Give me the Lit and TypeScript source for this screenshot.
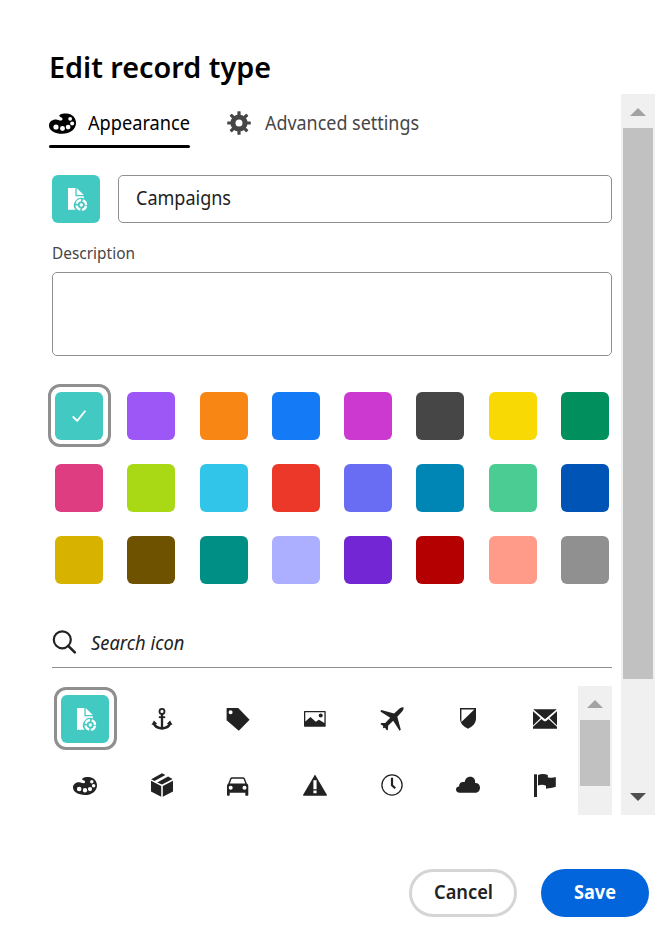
import { LitElement, html, svg, css, nothing } from "lit";
import { customElement, state } from "lit/decorators.js";
import { classMap } from "lit/directives/class-map.js";
import { styleMap } from "lit/directives/style-map.js";

const COLORS = [
  "#42c9c1", "#9d57f6", "#f88615", "#147af5", "#cc39d0", "#464646", "#f8d904", "#008f5d",
  "#de3d82", "#a9d815", "#31c5e9", "#eb3829", "#686df4", "#0086b4", "#4acc93", "#0054b6",
  "#d7b300", "#6f5200", "#008f85", "#acafff", "#7326d3", "#b40000", "#ff9b88", "#909090",
];

const ICONS: Record<string, unknown> = {
  file: svg`
    <path d="M4 1H11.4V9.2H19.8V11.3A7.3 7.3 0 0 0 11.6 22.8H4Z"/>
    <path d="M12.7 1L19.8 8.1H12.7Z"/>
    <circle cx="17.3" cy="18" r="4.8" fill="none" stroke="currentColor" stroke-width="2.2" stroke-dasharray="5.9 1.64" stroke-dashoffset="-.82"/>
    <circle cx="17.3" cy="18" r="1.7"/>`,
  anchor: svg`
    <g fill="none" stroke="currentColor" stroke-width="2">
      <circle cx="12" cy="4.4" r="2.5" stroke-width="1.8"/>
      <path d="M12 7V21.5" stroke-width="2.3"/><path d="M8.8 10.2H15.2" stroke-width="1.8"/>
      <path d="M3.8 16.2C4.8 19.6 8.2 21.2 12 21.4C15.8 21.2 19.2 19.6 20.2 16.2" stroke-width="2.6"/>
    </g>
    <path d="M3.9 13.4L7.2 16.8L1.5 17.9Z"/><path d="M20.1 13.4L16.8 16.8L22.5 17.9Z"/>`,
  tag: svg`<path fill-rule="evenodd" d="M1.2 1H12.2L23.6 12.7L12.8 23.7L.6 13.2V1.6Q.6 1 1.2 1ZM4.6 3.3A2 2 0 1 0 4.6 7.3A2 2 0 1 0 4.6 3.3Z"/>`,
  image: svg`
    <path fill-rule="evenodd" d="M1.6 4H22.1Q22.7 4 22.7 4.6V19.1Q22.7 19.7 22.1 19.7H1.6Q1 19.7 1 19.1V4.6Q1 4 1.6 4ZM2.3 5.3V14.6L7.5 10.1L12.7 14.8L16 12.8L21.4 16V5.3Z"/>
    <circle cx="17.7" cy="8.6" r="2"/>`,
  plane: svg`<path d="M23.4 .5C24.2 1.6 22.6 4.2 21.2 5.6L17.3 9.7L20.8 22.8L19.6 23.7L13.2 13.8L8.1 18.7L8 22.6L7 23.5L5 20.8L3 21.2L3.2 19.1L.4 17L1.3 16L5.2 15.9L10.2 10.7L.4 4.4L1.3 3.1L14.1 6.5L18.2 2.7C19.7 1.2 22.3-.3 23.4 .5Z"/>`,
  shield: svg`<path fill-rule="evenodd" d="M4 1H20V11.5C20 16.4 16.4 19.6 12 21.7C7.6 19.6 4 16.4 4 11.5ZM5.4 2.5V15L18.3 2.5Z"/>`,
  mail: svg`
    <path d="M.2 2.3H23.8L12.9 11.5Q12 12.3 11.1 11.5Z" />
    <path d="M0 4.2L7.6 11.1L0 18.4ZM24 4.2L16.4 11.1L24 18.4Z"/>
    <path d="M8.5 12L10.5 13.7Q12 14.8 13.5 13.7L15.5 12L24 19.8V21.7H0V19.8Z"/>`,
  palette: svg`
    <path fill-rule="evenodd" d="M0 14.6C0 11.2 3 9.2 6.3 9.3C8 9.4 9.2 10.4 10.8 10.2C12.5 9.9 12.4 8.2 11.1 7.6C9.6 6.9 8.7 6.3 9.4 5.4C10.6 4.3 13 4 15.5 4C20.5 4 24 7.9 24 12.4C24 18 18.5 22 12 22C5 22 0 19 0 14.6Z
      M6.2 13.7A2.3 2.3 0 1 0 6.2 18.3A2.3 2.3 0 1 0 6.2 13.7Z
      M12 15.1A2.2 2.2 0 1 0 12 19.5A2.2 2.2 0 1 0 12 15.1Z
      M17 14A2.1 2.1 0 1 0 17 18.2A2.1 2.1 0 1 0 17 14Z
      M20.6 11A1.8 1.8 0 1 0 20.6 14.6A1.8 1.8 0 1 0 20.6 11Z
      M18.8 7A1.7 1.7 0 1 0 18.8 10.4A1.7 1.7 0 1 0 18.8 7Z"/>`,
  box: svg`
    <path d="M1.2 6.2L12 .3L15.4 2L4.5 8ZM7.2 9.4L18.1 3.5L22.6 6L12 11.6Z"/>
    <path d="M1 7.8L11.2 13V23.7L1 18.4ZM23 7.8V18.4L12.8 23.7V13Z"/>`,
  car: svg`<path fill-rule="evenodd" d="M6.6 4.3H16.4C18 4.3 18.7 4.9 19.2 6.3L20.8 10.6C22 11.3 22.3 12.1 22.3 13.4V22.1Q22.3 22.7 21.7 22.7H19.9Q19.3 22.7 19.3 22.1V19.7H3.7V22.1Q3.7 22.7 3.1 22.7H1.6Q1 22.7 1 22.1V13.4C1 12.1 1.3 11.3 2.3 10.6L3.9 6.3C4.4 4.9 5 4.3 6.6 4.3ZM6.6 5.7C5.8 5.7 5.5 6 5.2 6.8L3.8 10.6H19.3L17.9 6.8C17.6 6 17.3 5.7 16.5 5.7ZM4.7 12.7A2 2 0 1 0 4.7 16.7A2 2 0 1 0 4.7 12.7ZM18.5 12.7A2 2 0 1 0 18.5 16.7A2 2 0 1 0 18.5 12.7Z"/>`,
  alert: svg`<path fill-rule="evenodd" d="M12 1.5L24 22.1Q24 22.7 23.4 22.7H.6Q0 22.7 0 22.1ZM10.4 7.2V16.2H13.6V7.2ZM10.4 17.5V20.3H13.6V17.5Z"/>`,
  clock: svg`
    <circle cx="12" cy="12" r="10.1" fill="none" stroke="currentColor" stroke-width="1.3"/>
    <path d="M12 4.8V12.2L15.2 15.3" fill="none" stroke="currentColor" stroke-width="2.2"/>`,
  cloud: svg`<path d="M3.6 19.7C1.4 19.7 0 18.3 0 16.5C0 14.6 1.5 13.4 3.2 13.5C2.8 10.6 5.1 8.4 8.7 9.1C9.1 5.9 11.2 3.7 14.2 3.7C17.7 3.7 19.6 6.4 19.1 10.1C22 9.9 24 12 24 14.7C24 17.8 21.8 19.7 19 19.7Z"/>`,
  flag: svg`
    <path d="M1 1.3H4V24H1Z"/>
    <path d="M5 2C8.5 .7 11.5 .8 14.8 2V4.2C17.5 5 20 4.8 22.8 4.1V13.8C19.4 15 16.5 15.2 13 15.8V12.7C10 11.4 7.6 11.8 5 12.5Z"/>`,
  gear: svg`
    <path fill-rule="evenodd" d="M12 3.4A8.6 8.6 0 1 0 12 20.6A8.6 8.6 0 1 0 12 3.4ZM12 8.5A3.5 3.5 0 1 1 12 15.5A3.5 3.5 0 1 1 12 8.5Z"/>
    ${[0, 45, 90, 135, 180, 225, 270, 315].map(
      (a) => svg`<path d="M10.4 4.5V.8Q10.4 .2 11 .2H13Q13.6 .2 13.6 .8V4.5Z" transform=${`rotate(${a} 12 12)`}/>`
    )}`,
  search: svg`
    <circle cx="10.3" cy="9.8" r="8.5" fill="none" stroke="currentColor" stroke-width="2.2"/>
    <path d="M16.2 15.8L22.8 22.4" stroke="currentColor" stroke-width="2.6" stroke-linecap="round"/>`,
  check: svg`<path d="M6.3 13L10.2 16.9L17.9 7.2" fill="none" stroke="currentColor" stroke-width="1.8" stroke-linecap="round" stroke-linejoin="round"/>`,
};

const icon = (name: string, width = 24, height = 24) =>
  html`<svg class="icon" width=${width} height=${height} viewBox="0 0 24 24" fill="currentColor">${ICONS[name]}</svg>`;

/* Text condensed to a set advance width; the baseline sits 24px below the top of a 32px line. */
const label = (text: string, width: number, kind: string) =>
  html`<svg class="label ${kind}" width=${width} height="32">
    <text x="0" y="24" textLength=${width} lengthAdjust="spacingAndGlyphs">${text}</text>
  </svg>`;

const PICKER = [
  "file", "anchor", "tag", "image", "plane", "shield", "mail",
  "palette", "box", "car", "alert", "clock", "cloud", "flag",
];

@customElement("app-root")
export class AppRoot extends LitElement {
  @state() private color = 0;
  @state() private picked = "file";

  static styles = css`
    :host {
      display: flex;
      flex-direction: column;
      box-sizing: border-box;
      width: 672px;
      height: 931px;
      background: #fff;
      color: #222;
      font-family: "Noto Sans", "Open Sans", sans-serif;
      overflow: hidden;
    }
    *, *::after { box-sizing: border-box; }
    svg { display: block; flex: none; }
    .label { overflow: visible; fill: currentColor; }
    .title { font-size: 29.5px; font-weight: 600; color: #000; }
    .tab-text { font-size: 19.3px; }
    .value { font-size: 19.3px; }
    .caption { font-size: 16.4px; color: #464646; }
    .hint { font-size: 19.3px; font-style: italic; }
    .action { font-size: 19.3px; font-weight: 600; }
    .strong { font-weight: 700; }
    header { height: 94px; padding: 54px 0 0 49px; }
    .body { display: flex; height: 721px; }
    .form { width: 612px; padding-left: 52px; }
    .bar {
      width: 34px;
      background: #f0f0f0;
      display: flex;
      flex-direction: column;
      align-items: center;
    }
    .main-bar { margin-left: 9px; height: 721px; }
    .arrow { height: 34px; padding-top: 14px; }
    .up, .down { width: 16px; height: 8px; background: #a3a3a3; }
    .up { clip-path: polygon(50% 0, 100% 100%, 0 100%); }
    .down { clip-path: polygon(0 0, 100% 0, 50% 100%); background: #505050; }
    .thumb { width: 30px; background: #c1c1c1; }
    .main-bar .thumb { height: 551px; }
    .main-bar .down { margin-top: 114px; }
    .tabs { display: flex; margin-left: -3px; height: 54px; gap: 37px; }
    .tab {
      display: flex;
      height: 54px;
      padding-top: 12px;
      color: #464646;
    }
    .tab.on { color: #000; position: relative; }
    .tab.on::after {
      content: "";
      position: absolute;
      left: 0; right: 0; bottom: 0;
      height: 3px;
      border-radius: 1.5px;
      background: #000;
    }
    .tab .icon { margin: 4.5px 14px 0 0; }
    .tab.on .icon { margin: 2.5px 12px 0 0; }
    .name-row { display: flex; gap: 18px; margin-top: 27px; }
    .tile {
      width: 48px;
      height: 48px;
      border-radius: 6px;
      display: flex;
      align-items: center;
      justify-content: center;
      color: #fff;
      flex: none;
    }
    .field { border: 1px solid #8f8f8f; border-radius: 5px; }
    .name { flex: 1; height: 48px; padding: 5px 0 0 17px; }
    .desc-label { height: 49px; padding: 12px 0 0 0; }
    .desc { height: 84px; }
    .swatches {
      display: grid;
      grid-template-columns: repeat(8, 48px);
      justify-content: space-between;
      row-gap: 24px;
      margin: 36px 3px 0;
    }
    .ring { position: relative; }
    .ring::after {
      content: "";
      position: absolute;
      left: -7px;
      top: -8px;
      width: 63px;
      height: 63px;
      border: 3px solid #8f8f8f;
      border-radius: 12px;
    }
    .search {
      display: flex;
      height: 38px;
      margin-top: 46px;
      border-bottom: 1px solid #8f8f8f;
    }
    .search .label { margin: -4px 0 0 15px; }
    .panel { display: flex; justify-content: space-between; height: 129px; margin-top: 18px; }
    .icons {
      display: grid;
      grid-template-columns: repeat(7, 76.6px);
      grid-template-rows: 66px 66px;
      justify-content: start;
      margin-left: -5px;
      width: 531px;
    }
    .cell { display: flex; align-items: center; justify-content: center; }
    .panel .thumb { height: 66px; }
    footer { display: flex; gap: 24px; margin: 54px 0 0 409px; }
    .button {
      width: 108px;
      height: 48px;
      border-radius: 24px;
      display: flex;
      justify-content: center;
      padding-top: 6px;
    }
    .cancel { border: 3px solid #d5d5d5; padding-top: 3px; }
    .save { background: #0265dc; color: #fff; }
  `;

  render() {
    const accent = { background: COLORS[this.color] };
    return html`
      <header>${label("Edit record type", 222, "title")}</header>
      <div class="body">
        <div class="form">
          <div class="tabs">
            <div class="tab on">${icon("palette", 27, 27)}${label("Appearance", 102, "tab-text")}</div>
            <div class="tab">${icon("gear")}${label("Advanced settings", 154, "tab-text")}</div>
          </div>
          <div class="name-row">
            <div class="tile" style=${styleMap(accent)}>${icon("file")}</div>
            <div class="field name">${label("Campaigns", 95, "value")}</div>
          </div>
          <div class="desc-label">${label("Description", 83, "caption")}</div>
          <div class="field desc"></div>
          <div class="swatches">
            ${COLORS.map(
              (c, i) => html`<div
                class=${classMap({ tile: true, ring: i === this.color })}
                style=${styleMap({ background: c })}
                @click=${() => (this.color = i)}
              >${i === this.color ? icon("check") : nothing}</div>`
            )}
          </div>
          <div class="search">${icon("search")}${label("Search icon", 93.5, "hint")}</div>
          <div class="panel">
            <div class="icons">
              ${PICKER.map(
                (n) => html`<div class="cell" @click=${() => (this.picked = n)}>
                  ${n === this.picked
                    ? html`<div class="tile ring" style=${styleMap(accent)}>${icon(n)}</div>`
                    : icon(n)}
                </div>`
              )}
            </div>
            <div class="bar">
              <div class="arrow"><div class="up"></div></div>
              <div class="thumb"></div>
            </div>
          </div>
        </div>
        <div class="bar main-bar">
          <div class="arrow"><div class="up"></div></div>
          <div class="thumb"></div>
          <div class="down"></div>
        </div>
      </div>
      <footer>
        <div class="button cancel">${label("Cancel", 59, "action")}</div>
        <div class="button save">${label("Save", 42, "action strong")}</div>
      </footer>
    `;
  }
}
